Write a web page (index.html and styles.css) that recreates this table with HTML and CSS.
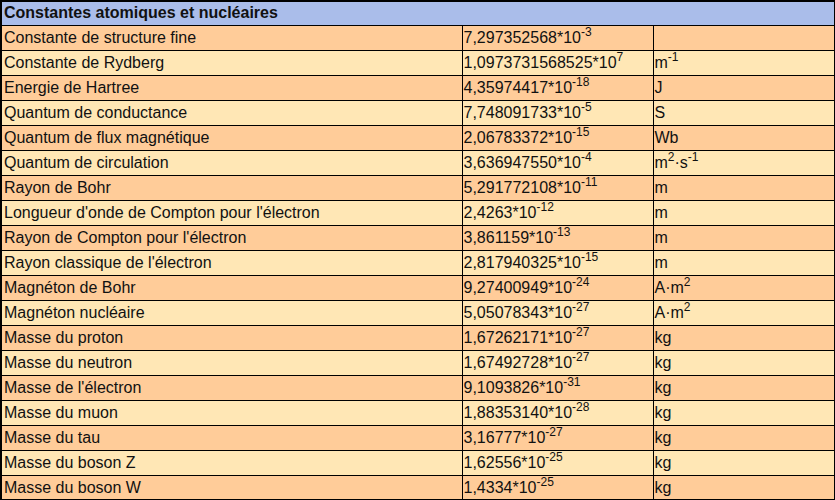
FILE: index.html
```html
<!DOCTYPE html>
<html lang="fr">
<head>
<meta charset="utf-8">
<title>Constantes atomiques et nucléaires</title>
<link rel="stylesheet" href="styles.css">
</head>
<body>
<table class="consts">
  <colgroup>
    <col class="c-name">
    <col class="c-val">
    <col class="c-unit">
  </colgroup>
  <thead>
    <tr class="head"><th colspan="3">Constantes atomiques et nucléaires</th></tr>
  </thead>
  <tbody>
    <tr class="odd"><td>Constante de structure fine</td><td class="v">7,297352568*10<sup>-3</sup></td><td class="u"></td></tr>
    <tr class="even"><td>Constante de Rydberg</td><td class="v">1,0973731568525*10<sup>7</sup></td><td class="u">m<sup>-1</sup></td></tr>
    <tr class="odd"><td>Energie de Hartree</td><td class="v">4,35974417*10<sup>-18</sup></td><td class="u">J</td></tr>
    <tr class="even"><td>Quantum de conductance</td><td class="v">7,748091733*10<sup>-5</sup></td><td class="u">S</td></tr>
    <tr class="odd"><td>Quantum de flux magnétique</td><td class="v">2,06783372*10<sup>-15</sup></td><td class="u">Wb</td></tr>
    <tr class="even"><td>Quantum de circulation</td><td class="v">3,636947550*10<sup>-4</sup></td><td class="u">m<sup>2</sup>·s<sup>-1</sup></td></tr>
    <tr class="odd"><td>Rayon de Bohr</td><td class="v">5,291772108*10<sup>-11</sup></td><td class="u">m</td></tr>
    <tr class="even"><td>Longueur d'onde de Compton pour l'électron</td><td class="v">2,4263*10<sup>-12</sup></td><td class="u">m</td></tr>
    <tr class="odd"><td>Rayon de Compton pour l'électron</td><td class="v">3,861159*10<sup>-13</sup></td><td class="u">m</td></tr>
    <tr class="even"><td>Rayon classique de l'électron</td><td class="v">2,817940325*10<sup>-15</sup></td><td class="u">m</td></tr>
    <tr class="odd"><td>Magnéton de Bohr</td><td class="v">9,27400949*10<sup>-24</sup></td><td class="u">A·m<sup>2</sup></td></tr>
    <tr class="even"><td>Magnéton nucléaire</td><td class="v">5,05078343*10<sup>-27</sup></td><td class="u">A·m<sup>2</sup></td></tr>
    <tr class="odd"><td>Masse du proton</td><td class="v">1,67262171*10<sup>-27</sup></td><td class="u">kg</td></tr>
    <tr class="even"><td>Masse du neutron</td><td class="v">1,67492728*10<sup>-27</sup></td><td class="u">kg</td></tr>
    <tr class="odd"><td>Masse de l'électron</td><td class="v">9,1093826*10<sup>-31</sup></td><td class="u">kg</td></tr>
    <tr class="even"><td>Masse du muon</td><td class="v">1,88353140*10<sup>-28</sup></td><td class="u">kg</td></tr>
    <tr class="odd"><td>Masse du tau</td><td class="v">3,16777*10<sup>-27</sup></td><td class="u">kg</td></tr>
    <tr class="even"><td>Masse du boson Z</td><td class="v">1,62556*10<sup>-25</sup></td><td class="u">kg</td></tr>
    <tr class="odd"><td>Masse du boson W</td><td class="v">1,4334*10<sup>-25</sup></td><td class="u">kg</td></tr>
  </tbody>
</table>
</body>
</html>
```
FILE: styles.css
```css
html, body {
  margin: 0;
  padding: 0;
  background: #ffffff;
}
body {
  font-family: "Liberation Sans", Arial, sans-serif;
  font-size: 16px;
  color: #111;
}
.consts {
  border-collapse: collapse;
  table-layout: fixed;
  width: 834px;
  border: 2px solid #000;
}
.c-name { width: 461px; }
.c-val { width: 191px; }
.c-unit { width: 182px; }
.consts th, .consts td {
  border: 1px solid #000;
  padding: 1px 0 0 2px;
  height: 25px;
  box-sizing: border-box;
  line-height: 18px;
  vertical-align: middle;
  text-align: left;
  white-space: nowrap;
}
.consts td.v, .consts td.u {
  padding-left: 1px;
}
.head th {
  background: #aabdea;
  font-weight: bold;
  height: 24px;
  padding-top: 0;
}
.odd td { background: #ffcc99; }
.even td { background: #ffe7b5; }
sup {
  font-size: 12px;
  line-height: 0;
  vertical-align: 7px;
}
```
